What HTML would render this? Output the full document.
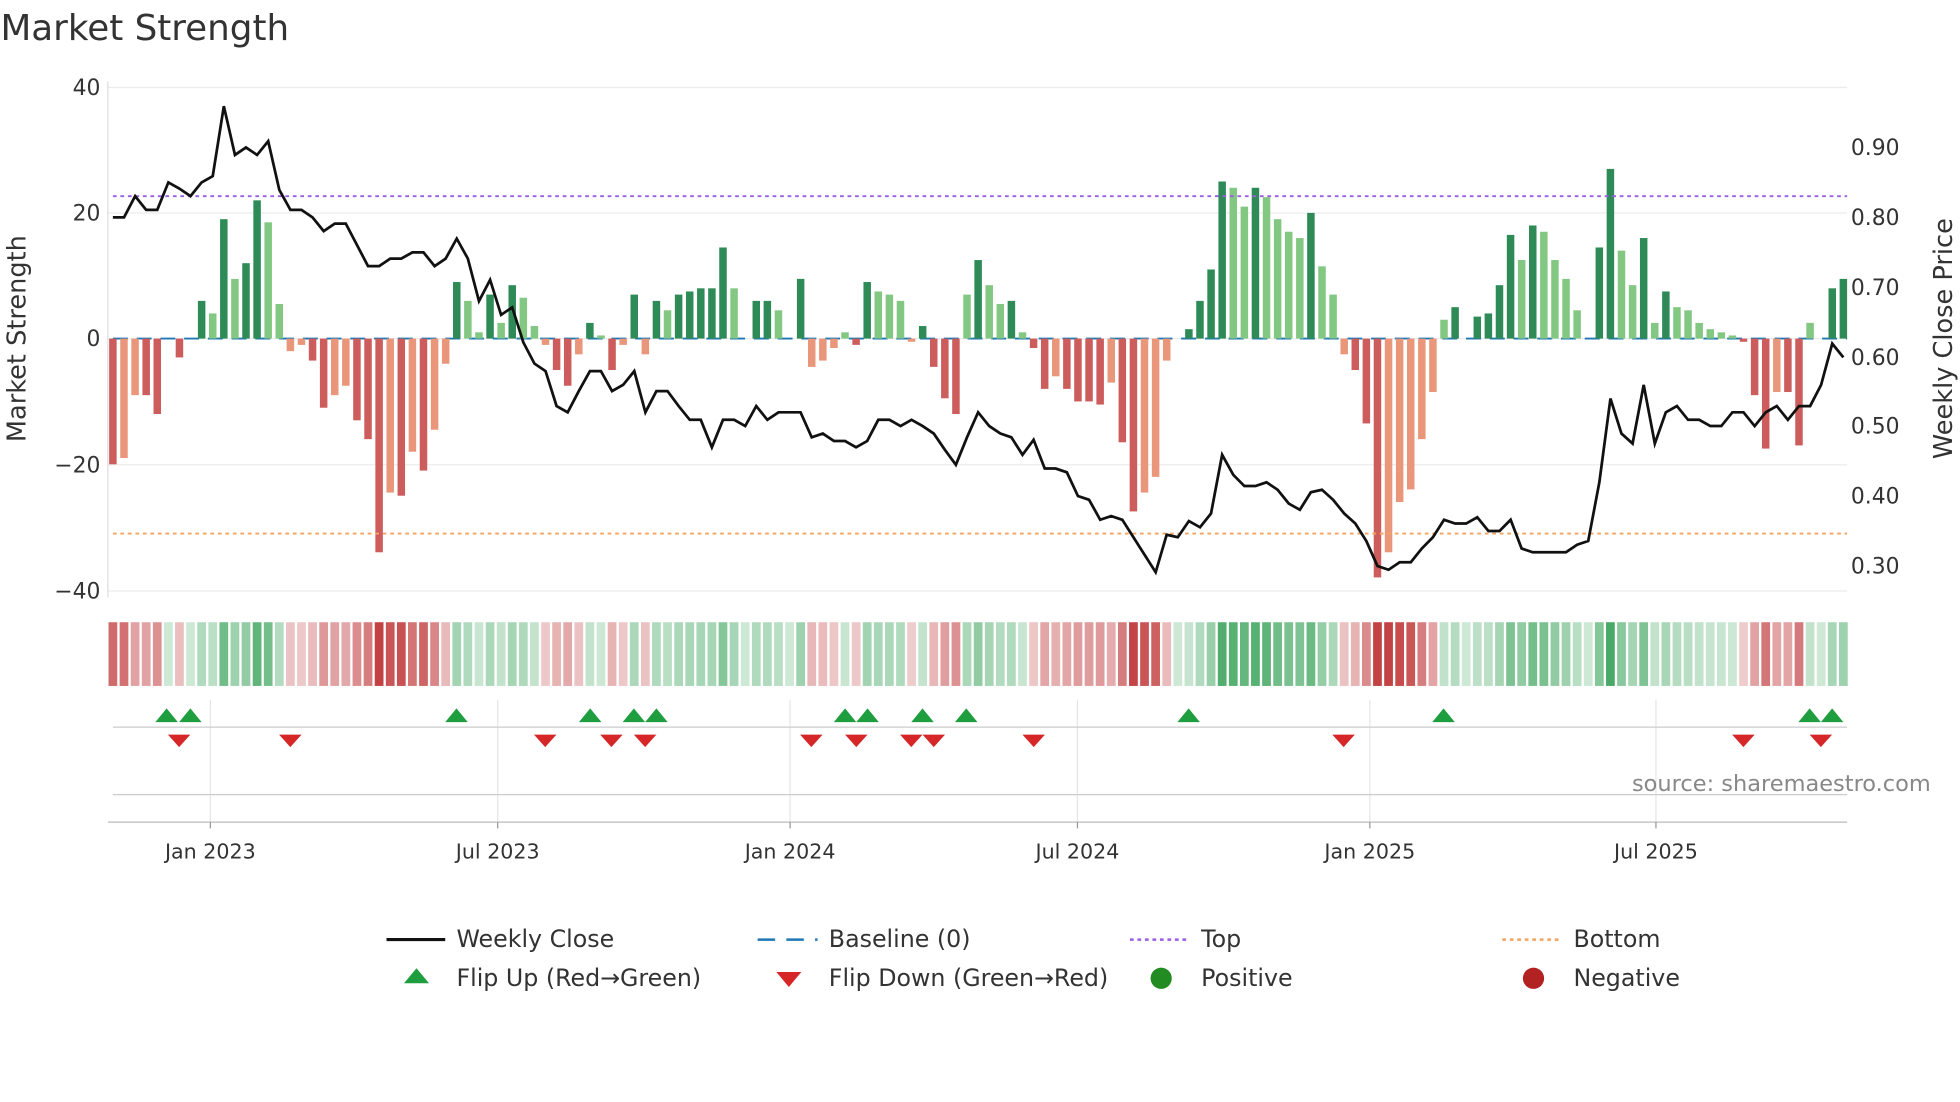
<!DOCTYPE html>
<html><head><meta charset="utf-8"><style>
html,body{margin:0;padding:0;background:#fff;}
svg{display:block;font-family:"DejaVu Sans","Liberation Sans",sans-serif;}
</style></head><body>
<svg id="s" width="1960" height="1102" viewBox="0 0 1568 882" xmlns="http://www.w3.org/2000/svg">
<rect width="1568" height="882" fill="#fff"/>
<text x="0" y="32" font-size="28.6" fill="#333">Market Strength</text>
<g id="g"></g>
</svg>
<script>
const v=[-20,-19,-9,-9,-12,0,-3,0,6,4,19,9.5,12,22,18.5,5.5,-2,-1,-3.5,-11,-9,-7.5,-13,-16,-34,-24.5,-25,-18,-21,-14.5,-4,9,6,1,7,2.5,8.5,6.5,2,-1,-5,-7.5,-2.5,2.5,0.5,-5,-1,7,-2.5,6,4.5,7,7.5,8,8,14.5,8,0,6,6,4.5,0,9.5,-4.5,-3.5,-1.5,1,-1,9,7.5,7,6,-0.5,2,-4.5,-9.5,-12,7,12.5,8.5,5.5,6,1,-1.5,-8,-6,-8,-10,-10,-10.5,-7,-16.5,-27.5,-24.5,-22,-3.5,0,1.5,6,11,25,24,21,24,22.5,19,17,16,20,11.5,7,-2.5,-5,-13.5,-38,-34,-26,-24,-16,-8.5,3,5,0,3.5,4,8.5,16.5,12.5,18,17,12.5,9.5,4.5,0,14.5,27,14,8.5,16,2.5,7.5,5,4.5,2.5,1.5,1,0.5,-0.5,-9,-17.5,-8.5,-8.5,-17,2.5,0,8,9.5];
const py=[174,174,157,168,168,146,151,157,146,141,85,124,118,124,113,152,168,168,174,185,179,179,196,213,213,207,207,202,202,213,207,191,207,241,224,252,246,274,291,297,325,330,313,297,297,313,308,297,330,313,313,325,336,336,358,336,336,341,325,336,330,330,330,350,347,353,353,358,353,336,336,341,336,341,347,360,372,350,330,341,347,350,364,352,375,375,378,397,400,416,413,416,430,444,458,428,430,417,422,411,364,380,389,389,386,392,403,408,394,392,400,411,419,433,453,456,450,450,439,430,416,419,419,414,425,425,416,439,442,442,442,442,436,433,386,319,347,355,308,355,330,325,336,336,341,341,330,330,341,330,325,336,325,325,308,275,286];
const X=i=>90+i*(1385/156), Y=val=>271-val*5.03;
let h='';
[70,170.5,271,372,473].forEach(y=>h+=`<line x1="86" x2="1478" y1="${y}" y2="${y}" stroke="#ececec"/>`);
[168,398,632,862,1096,1325].forEach(x=>{h+=`<line x1="${x}" x2="${x}" y1="560" y2="658" stroke="#e6e6e6"/>`});
h+=`<line x1="86" x2="86" y1="65" y2="478" stroke="#ddd"/>`;
h+=`<line x1="90" x2="1478" y1="271" y2="271" stroke="#1f77b4" stroke-width="1.5" stroke-dasharray="12,7"/>`;
v.forEach((a,i)=>{const p=i?Math.abs(v[i-1]):0,dk=Math.abs(a)>=p;let c=a>=0?(dk?'#2e8b57':'#82c782'):(dk?'#cd5c5c':'#e9967a');
const y=Y(Math.max(a,0)),hh=Math.abs(a)*5.03;if(hh>0.3)h+=`<rect x="${X(i)-3}" y="${y}" width="6" height="${hh}" fill="${c}"/>`;
const op=0.25+0.7*Math.min(Math.abs(a),28)/28;h+=`<rect x="${X(i)-3.5}" y="498" width="7" height="51" fill="${a>=0?'#3aa35a':'#c0393b'}" opacity="${op.toFixed(2)}"/>`;});
h+=`<line x1="90" x2="1478" y1="157" y2="157" stroke="#9b5de5" stroke-width="1.5" stroke-dasharray="3,3"/>`;
h+=`<line x1="90" x2="1478" y1="427" y2="427" stroke="#f4a460" stroke-width="1.5" stroke-dasharray="3,3"/>`;
h+=`<polyline fill="none" stroke="#111" stroke-width="2.2" points="${py.map((y,i)=>X(i).toFixed(1)+','+y).join(' ')}"/>`;
[[40,70],[20,170.5],[0,271],[-20,372],[-40,473]].forEach(([t,y])=>h+=`<text x="80" y="${y+6}" font-size="17.5" text-anchor="end" fill="#333">${t<0?'\u2212'+(-t):t}</text>`);
[['0.90',118],['0.80',174],['0.70',230],['0.60',286],['0.50',341],['0.40',397],['0.30',453]].forEach(([t,y])=>h+=`<text x="1481" y="${y+6}" font-size="17.5" fill="#333">${t}</text>`);
h+=`<text transform="translate(20,271) rotate(-90)" font-size="20.5" text-anchor="middle" fill="#333">Market Strength</text>`;
h+=`<text transform="translate(1562,271) rotate(-90)" font-size="20.5" text-anchor="middle" fill="#333">Weekly Close Price</text>`;
h+=`<line x1="90" x2="1478" y1="582" y2="582" stroke="#ccc"/><line x1="90" x2="1478" y1="636" y2="636" stroke="#ccc"/><line x1="86" x2="1478" y1="658" y2="658" stroke="#bbb"/>`;
[133,152,365,472,507,525,676,694,738,773,951,1155,1448,1466].forEach(x=>h+=`<polygon points="${x-9},578 ${x+9},578 ${x},567" fill="#1e9e3e"/>`);
[143,232,436,489,516,649,685,729,747,827,1075,1395,1457].forEach(x=>h+=`<polygon points="${x-9},588 ${x+9},588 ${x},598" fill="#d62728"/>`);
h+=`<text x="1545" y="633" font-size="18" text-anchor="end" fill="#888">source: sharemaestro.com</text>`;
[['Jan 2023',168],['Jul 2023',398],['Jan 2024',632],['Jul 2024',862],['Jan 2025',1096],['Jul 2025',1325]].forEach(([t,x])=>h+=`<line x1="${x}" x2="${x}" y1="658" y2="663" stroke="#999"/><text x="${x}" y="687" font-size="16.5" text-anchor="middle" fill="#333">${t}</text>`);
const L=(x,y,t)=>`<text x="${x}" y="${y+6}" font-size="19" fill="#333">${t}</text>`;
h+=`<line x1="309" x2="356" y1="752" y2="752" stroke="#111" stroke-width="2.5"/>`+L(365,752,'Weekly Close');
h+=`<line x1="606" x2="654" y1="752" y2="752" stroke="#1f77b4" stroke-width="2" stroke-dasharray="14,9"/>`+L(663,752,'Baseline (0)');
h+=`<line x1="904" x2="950" y1="752" y2="752" stroke="#9b5de5" stroke-width="2" stroke-dasharray="3,3"/>`+L(961,752,'Top');
h+=`<line x1="1202" x2="1248" y1="752" y2="752" stroke="#f4a460" stroke-width="2" stroke-dasharray="3,3"/>`+L(1259,752,'Bottom');
h+=`<polygon points="323,787 343,787 333,775" fill="#1e9e3e"/>`+L(365,783,'Flip Up (Red\u2192Green)');
h+=`<polygon points="621,778 641,778 631,790" fill="#d62728"/>`+L(663,783,'Flip Down (Green\u2192Red)');
h+=`<circle cx="929" cy="783" r="8.5" fill="#228b22"/>`+L(961,783,'Positive');
h+=`<circle cx="1227" cy="783" r="8.5" fill="#b22222"/>`+L(1259,783,'Negative');
document.getElementById('g').innerHTML=h;
</script>
</body></html>
